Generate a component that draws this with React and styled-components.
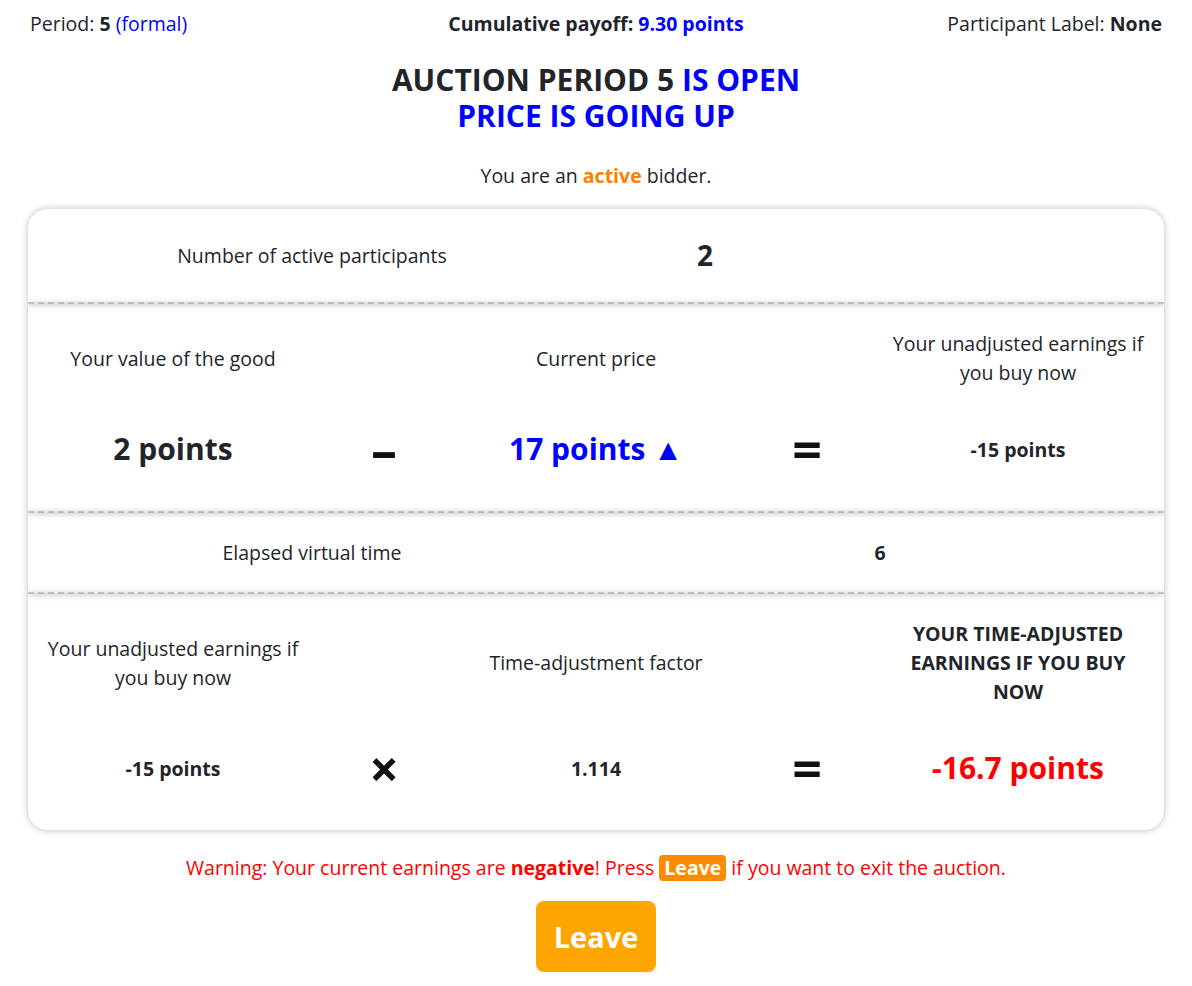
import React from 'react';
import styled, { createGlobalStyle } from 'styled-components';

const GlobalStyle = createGlobalStyle`
  body {
    margin: 0;
    background: #fff;
    color: #212529;
    font-family: "Open Sans", "Noto Sans", "Liberation Sans", sans-serif;
    font-size: 19.5px;
  }
`;

const Page = styled.div`
  display: flex;
  flex-direction: column;
  align-items: stretch;
`;

const TopBar = styled.div`
  display: grid;
  grid-template-columns: 1fr auto 1fr;
  align-items: center;
  height: 46px;
  padding: 0 30px;
`;

const TopItem = styled.div`
  text-align: ${p => p.align || 'left'};
  white-space: nowrap;
`;

const Blue = styled.span`
  color: #0000ff;
`;

const Bold = styled.b`
  font-weight: 700;
`;

const Title = styled.h1`
  margin: 16px 0 0;
  text-align: center;
  font-size: 30px;
  line-height: 36px;
  font-weight: 700;
`;

const Status = styled.p`
  margin: 27px 0 0;
  text-align: center;
  line-height: 29px;
`;

const Active = styled.span`
  color: #ff8000;
  font-weight: 700;
`;

const Card = styled.div`
  margin: 19px 28px 0;
  display: flex;
  flex-direction: column;
`;

const Row = styled.div`
  display: grid;
  grid-template-columns: ${p => p.cols};
  row-gap: 40px;
  padding: 25px 0 ${p => (p.tight ? 25 : 40)}px;
  box-shadow: 0 0 7px rgba(0, 0, 0, 0.28);
  border-bottom: 2px dashed #d4d4d4;
  line-height: 29px;
  text-align: center;
  align-items: center;

  &:first-child {
    padding-bottom: 26px;
    border-radius: 20px 20px 0 0;
  }
  &:last-child {
    border-radius: 0 0 20px 20px;
    border-bottom: none;
  }
`;

const Label = styled.div`
  padding: 0 14px;
`;

const Heading = styled.div`
  padding: 0 14px;
  font-weight: 700;
  text-transform: uppercase;
`;

const Value = styled.div`
  font-weight: 700;
  font-size: ${p => (p.size ? `${p.size}px` : 'inherit')};
  line-height: ${p => (p.size && p.size > 24 ? 42 : 29)}px;
  color: ${p => p.color || '#212529'};
`;

const Operator = styled.div`
  font-weight: 700;
  font-size: 52px;
  line-height: 44px;
  color: #111;
`;

const Warning = styled.p`
  margin: 23px 0 0;
  text-align: center;
  color: #ff0000;
  line-height: 29px;
`;

const Badge = styled.span`
  display: inline-block;
  background: #ff8c00;
  color: #fff;
  font-weight: 700;
  padding: 0 5px;
  border-radius: 4px;
  line-height: 26px;
`;

const LeaveButton = styled.button`
  align-self: center;
  margin-top: 19px;
  width: 120px;
  height: 71px;
  border: none;
  border-radius: 8px;
  background: #ffa500;
  color: #fff;
  font-family: inherit;
  font-size: 29px;
  font-weight: 700;
  cursor: pointer;
`;

const FIVE = '290px 132px 292px 130px 1fr';

export default function App() {
  return (
    <Page>
      <GlobalStyle />
      <TopBar>
        <TopItem>
          Period: <Bold>5</Bold> <Blue>(formal)</Blue>
        </TopItem>
        <TopItem align="center">
          <Bold>Cumulative payoff: <Blue>9.30 points</Blue></Bold>
        </TopItem>
        <TopItem align="right">
          Participant Label: <Bold>None</Bold>
        </TopItem>
      </TopBar>

      <Title>
        AUCTION PERIOD 5 <Blue>IS OPEN</Blue>
        <br />
        <Blue>PRICE IS GOING UP</Blue>
      </Title>

      <Status>
        You are an <Active>active</Active> bidder.
      </Status>

      <Card>
        <Row cols="568px 218px 1fr" tight>
          <Label>Number of active participants</Label>
          <Value size={28}>2</Value>
          <div />
        </Row>

        <Row cols={FIVE}>
          <Label>Your value of the good</Label>
          <div />
          <Label>Current price</Label>
          <div />
          <Label>Your unadjusted earnings if you buy now</Label>

          <Value size={30}>2 points</Value>
          <Operator>–</Operator>
          <Value size={30} color="#0000ff">17 points ▲</Value>
          <Operator>=</Operator>
          <Value>-15 points</Value>
        </Row>

        <Row cols="1fr 1fr" tight>
          <Label>Elapsed virtual time</Label>
          <Value>6</Value>
        </Row>

        <Row cols={FIVE}>
          <Label>Your unadjusted earnings if you buy now</Label>
          <div />
          <Label>Time-adjustment factor</Label>
          <div />
          <Heading>Your time-adjusted earnings if you buy now</Heading>

          <Value>-15 points</Value>
          <Operator>×</Operator>
          <Value>1.114</Value>
          <Operator>=</Operator>
          <Value size={30} color="#ff0000">-16.7 points</Value>
        </Row>
      </Card>

      <Warning>
        Warning: Your current earnings are <Bold>negative</Bold>! Press <Badge>Leave</Badge> if you want to exit the auction.
      </Warning>

      <LeaveButton>Leave</LeaveButton>
    </Page>
  );
}
